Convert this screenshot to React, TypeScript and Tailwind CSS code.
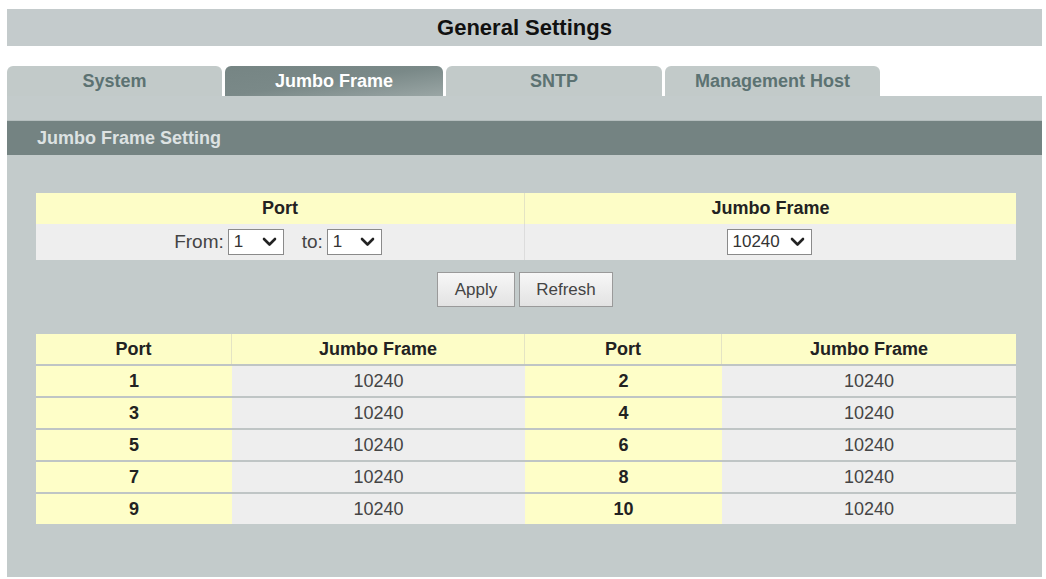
const tabs = [
  { name: "System", w: "w-[215px]" },
  { name: "Jumbo Frame", w: "w-[218px]" },
  { name: "SNTP", w: "w-[216px]" },
  { name: "Management Host", w: "w-[215px]" },
];
const rows = [
  [1, 2],
  [3, 4],
  [5, 6],
  [7, 8],
  [9, 10],
];

const Chevron = () => (
  <svg width="15" height="10" viewBox="0 0 15 10" className="shrink-0">
    <polyline points="2,2 7.5,7.5 13,2" fill="none" stroke="#222" strokeWidth="2.6" strokeLinecap="round" strokeLinejoin="round" />
  </svg>
);

const Select = ({ value, width }: { value: string; width: string }) => (
  <div className={`${width} h-[26px] bg-white border border-[#8a8a8a] flex items-center justify-between pl-[5px] pr-[6px] text-[17px] text-[#333]`}>
    <span>{value}</span>
    <Chevron />
  </div>
);

const App = () => {
  return (
    <div className="w-[1046px] h-[579px] bg-white pt-[9px] font-['Liberation_Sans',Arial,sans-serif]">
      {/* Title */}
      <div className="ml-[7px] w-[1035px] h-[37px] bg-[#c4cbcc] flex items-center justify-center text-[22px] font-bold text-[#111]">
        General Settings
      </div>

      {/* Tabs */}
      <div className="ml-[7px] mt-[20px] flex gap-[3px] h-[30px]">
        {tabs.map((t) => (
          <div
            key={t.name}
            className={
              t.name === "Jumbo Frame"
                ? `${t.w} rounded-t-[6px] bg-gradient-to-br from-[#768584] via-[#7a8988] to-[#9aa6a5] flex items-center justify-center text-[18px] font-bold text-white`
                : `${t.w} rounded-t-[6px] bg-[#c2cac9] flex items-center justify-center text-[18px] font-bold text-[#5c7272]`
            }
          >
            {t.name}
          </div>
        ))}
      </div>

      {/* Content */}
      <div className="ml-[7px] w-[1035px] h-[481px] bg-[#c3cbcb]">
        <div className="h-[25px] border-b border-[#b5bebe]" />
        <div className="h-[34px] bg-[#748382] flex items-center pl-[30px] text-[18px] font-bold text-[#dde2e2]">
          Jumbo Frame Setting
        </div>

        <div className="pl-[29px] pt-[38px]">
          {/* Form */}
          <div className="w-[980px]">
            <div className="flex h-[31px] bg-[#fdfdc7] text-[18px] font-bold text-[#222]">
              <div className="w-[489px] flex items-center justify-center border-r border-[#e4e4c4]">Port</div>
              <div className="flex-1 flex items-center justify-center">Jumbo Frame</div>
            </div>
            <div className="flex h-[36px] bg-[#eeeeee] text-[19px] text-[#444]">
              <div className="w-[489px] flex items-center justify-center gap-[4px] border-r border-[#dcdcdc] pr-[4px]">
                <span>From:</span>
                <Select value="1" width="w-[56px]" />
                <span className="ml-[14px]">to:</span>
                <Select value="1" width="w-[55px]" />
              </div>
              <div className="flex-1 flex items-center justify-center pr-[3px]">
                <Select value="10240" width="w-[85px]" />
              </div>
            </div>
          </div>

          {/* Buttons */}
          <div className="w-[980px] mt-[12px] flex justify-center gap-[4px] pr-[2px]">
            <button className="w-[78px] h-[35px] bg-gradient-to-b from-[#f7f7f7] to-[#e3e3e3] border border-[#9a9a9a] text-[17px] text-[#444]">
              Apply
            </button>
            <button className="w-[94px] h-[35px] bg-gradient-to-b from-[#f7f7f7] to-[#e3e3e3] border border-[#9a9a9a] text-[17px] text-[#444]">
              Refresh
            </button>
          </div>

          {/* Table */}
          <div className="w-[980px] mt-[27px]">
            <div className="flex h-[30px] bg-[#fdfdc7] text-[18px] font-bold text-[#222]">
              <div className="w-[196px] flex items-center justify-center border-r border-[#e4e4c4]">Port</div>
              <div className="w-[293px] flex items-center justify-center border-r border-[#e4e4c4]">Jumbo Frame</div>
              <div className="w-[197px] flex items-center justify-center border-r border-[#e4e4c4]">Port</div>
              <div className="flex-1 flex items-center justify-center">Jumbo Frame</div>
            </div>
            {rows.map(([a, b]) => (
              <div key={a} className="flex h-[32px] border-t-2 border-[#bfc5c5] text-[18px]">
                <div className="w-[196px] bg-[#fefec8] flex items-center justify-center font-bold text-[#222]">{a}</div>
                <div className="w-[293px] bg-[#eeeeee] flex items-center justify-center text-[#444]">10240</div>
                <div className="w-[197px] bg-[#fefec8] flex items-center justify-center font-bold text-[#222]">{b}</div>
                <div className="flex-1 bg-[#eeeeee] flex items-center justify-center text-[#444]">10240</div>
              </div>
            ))}
          </div>
        </div>
      </div>
    </div>
  );
};

export default App;
